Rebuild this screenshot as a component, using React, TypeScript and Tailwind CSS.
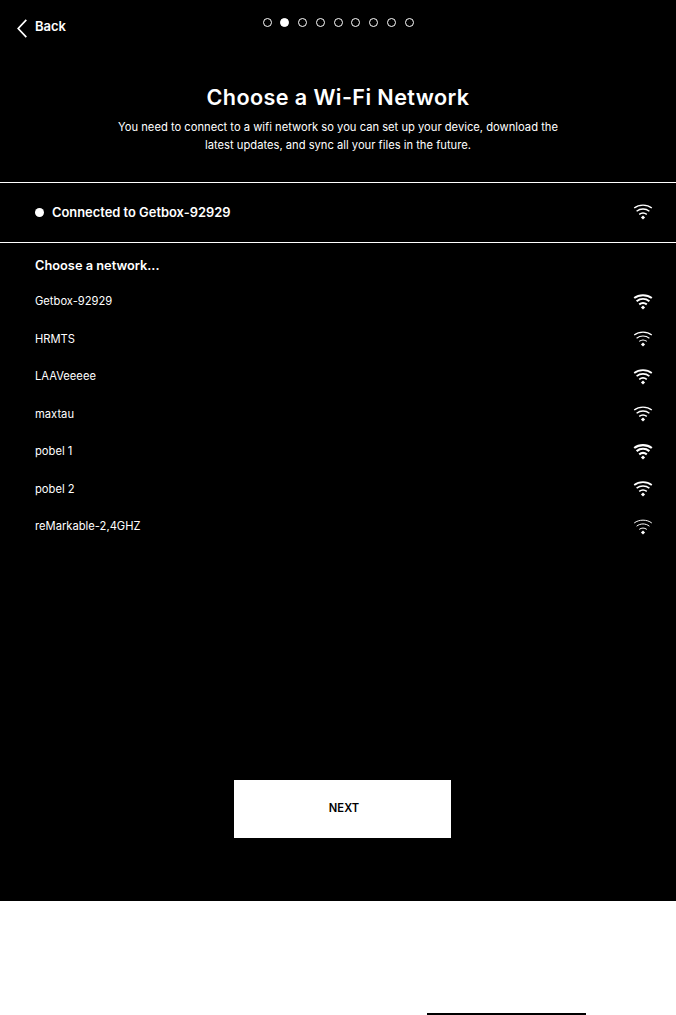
const NETWORKS = [
  { name: 'Getbox-92929', weight: 2 },
  { name: 'HRMTS', weight: 1.1 },
  { name: 'LAAVeeeee', weight: 1.7 },
  { name: 'maxtau', weight: 1.4 },
  { name: 'pobel 1', weight: 2.2 },
  { name: 'pobel 2', weight: 1.6 },
  { name: 'reMarkable-2,4GHZ', weight: 1 },
]

function WifiIcon({ weight }: { weight: number }) {
  return (
    <svg width="20" height="16" viewBox="0 0 20 16" fill="none" stroke="white" strokeWidth={weight} className="shrink-0">
      <path d="M1.2 4C6 .2 14 .2 18.8 4" />
      <path d="M3.6 7.2C7.4 4.2 12.6 4.2 16.4 7.2" />
      <path d="M6.2 10.4C8.6 8.6 11.4 8.6 13.8 10.4" />
      <path d="M7.9 13.4 10 11.6 12.1 13.4 10 15.4Z" fill="white" stroke="none" />
    </svg>
  )
}

export default function App() {
  return (
    <div className="flex h-[1015px] flex-col overflow-hidden bg-white font-['Inter',sans-serif] text-white">
      <div className="flex h-[901px] flex-col bg-black">
        <div className="grid grid-cols-[1fr_auto_1fr] items-start pt-[17px]">
          <div className="flex items-center gap-[8px] pl-[17px]">
            <svg width="10" height="19" viewBox="0 0 10 19" fill="none" stroke="white" strokeWidth="1.7">
              <path d="M9.3 .8 1.2 9.5 9.3 18.2" />
            </svg>
            <span className="pb-[3px] text-[13px] leading-[19px] font-semibold">Back</span>
          </div>
          <div className="mt-[1px] flex gap-[8.75px]">
            {Array.from({ length: 9 }).map((_, i) => (
              <span
                key={i}
                className={i === 1 ? 'size-[9px] rounded-full border border-white bg-white' : 'size-[9px] rounded-full border border-white'}
              />
            ))}
          </div>
          <div />
        </div>

        <h1 className="mt-[44px] text-center text-[21.6px] leading-[28px] font-semibold tracking-[0.4px]">
          Choose a Wi-Fi Network
        </h1>
        <p className="mt-[8px] text-center text-[11.2px] leading-[17.5px]">
          You need to connect to a wifi network so you can set up your device, download the
          <br />
          latest updates, and sync all your files in the future.
        </p>

        <div className="mt-[28px] flex h-[61px] items-center justify-between border-y border-white pr-[23px] pl-[35px]">
          <div className="flex items-center gap-[8px]">
            <span className="size-[9px] rounded-full bg-white" />
            <span className="text-[12.9px] font-semibold">Connected to Getbox-92929</span>
          </div>
          <div className="mb-[2px]">
            <WifiIcon weight={1.4} />
          </div>
        </div>

        <div className="pt-[14px] pr-[23px] pl-[35px]">
          <p className="text-[12.8px] leading-[18px] font-semibold">Choose a network...</p>
          <ul className="mt-[8px]">
            {NETWORKS.map(n => (
              <li key={n.name} className="flex h-[37.5px] items-center justify-between text-[11.2px]">
                <span>{n.name}</span>
                <WifiIcon weight={n.weight} />
              </li>
            ))}
          </ul>
        </div>

        <div className="mt-[234px] ml-[234px] flex h-[58px] w-[217px] items-center justify-center bg-white pl-[3px] text-[11.2px] font-semibold text-black">
          NEXT
        </div>
      </div>
      <div className="mt-auto ml-[427px] h-[2px] w-[159px] bg-black" />
    </div>
  )
}
